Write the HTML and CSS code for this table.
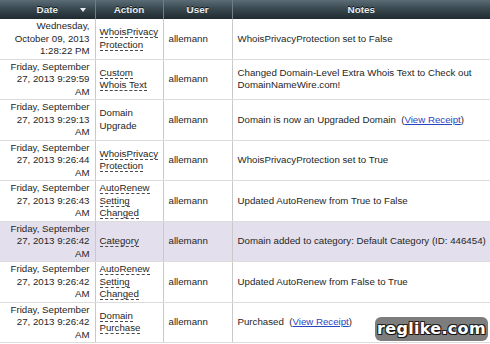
FILE: index.html
```html
<!DOCTYPE html>
<html>
<head>
<meta charset="utf-8">
<link rel="stylesheet" href="styles.css">
</head>
<body>
<div class="wrap">
<table class="log">
  <colgroup>
    <col class="c-date"><col class="c-action"><col class="c-user"><col class="c-notes">
  </colgroup>
  <thead>
    <tr>
      <th class="h-date">Date <span class="sort"></span></th>
      <th>Action</th>
      <th>User</th>
      <th>Notes</th>
    </tr>
  </thead>
  <tbody>
    <tr>
      <td class="date">Wednesday,<br>October 09, 2013<br>1:28:22 PM</td>
      <td class="action"><span class="tip">WhoisPrivacy<br>Protection</span></td>
      <td class="user">allemann</td>
      <td class="notes">WhoisPrivacyProtection set to False</td>
    </tr>
    <tr>
      <td class="date">Friday, September<br>27, 2013 9:29:59<br>AM</td>
      <td class="action"><span class="tip">Custom<br>Whois Text</span></td>
      <td class="user">allemann</td>
      <td class="notes">Changed Domain-Level Extra Whois Text to Check out DomainNameWire.com!</td>
    </tr>
    <tr>
      <td class="date">Friday, September<br>27, 2013 9:29:13<br>AM</td>
      <td class="action">Domain<br>Upgrade</td>
      <td class="user">allemann</td>
      <td class="notes">Domain is now an Upgraded Domain &nbsp;(<a href="#">View Receipt</a>)</td>
    </tr>
    <tr>
      <td class="date">Friday, September<br>27, 2013 9:26:44<br>AM</td>
      <td class="action"><span class="tip">WhoisPrivacy<br>Protection</span></td>
      <td class="user">allemann</td>
      <td class="notes">WhoisPrivacyProtection set to True</td>
    </tr>
    <tr>
      <td class="date">Friday, September<br>27, 2013 9:26:43<br>AM</td>
      <td class="action"><span class="tip">AutoRenew<br>Setting<br>Changed</span></td>
      <td class="user">allemann</td>
      <td class="notes">Updated AutoRenew from True to False</td>
    </tr>
    <tr class="hl">
      <td class="date">Friday, September<br>27, 2013 9:26:42<br>AM</td>
      <td class="action"><span class="tip">Category</span></td>
      <td class="user">allemann</td>
      <td class="notes single">Domain added to category: Default Category (ID: 446454)</td>
    </tr>
    <tr>
      <td class="date">Friday, September<br>27, 2013 9:26:42<br>AM</td>
      <td class="action"><span class="tip">AutoRenew<br>Setting<br>Changed</span></td>
      <td class="user">allemann</td>
      <td class="notes">Updated AutoRenew from False to True</td>
    </tr>
    <tr>
      <td class="date">Friday, September<br>27, 2013 9:26:42<br>AM</td>
      <td class="action"><span class="tip">Domain<br>Purchase</span></td>
      <td class="user">allemann</td>
      <td class="notes">Purchased &nbsp;(<a href="#">View Receipt</a>)</td>
    </tr>
  </tbody>
</table>
<div class="mark">reglike.com</div>
</div>
</body>
</html>
```

FILE: styles.css
```css
html, body {
  margin: 0;
  padding: 0;
  background: #ffffff;
  overflow: hidden;
}
.wrap {
  position: relative;
  width: 490px;
  height: 344px;
  overflow: hidden;
}
.log {
  width: 490px;
  border-collapse: collapse;
  table-layout: fixed;
  font-family: "Liberation Sans", Arial, sans-serif;
  font-size: 9.7px;
  color: #262626;
}
.c-date { width: 95px; }
.c-action { width: 68px; }
.c-user { width: 69px; }
.c-notes { width: 258px; }

.log thead th {
  height: 19px;
  padding: 0 4px;
  background: linear-gradient(to bottom, #5b6c76 0%, #3a4950 45%, #1f2a30 100%);
  color: #e9eef1;
  font-weight: bold;
  font-size: 9.9px;
  text-align: center;
  text-shadow: 0 -1px 0 #0d1418;
  border-left: 1px solid #6f7f88;
  box-sizing: border-box;
}
.log thead th:first-child { border-left: none; }
.h-date { position: relative; }
.sort {
  position: absolute;
  left: 80px;
  top: 8px;
  width: 0;
  height: 0;
  border-left: 3px solid transparent;
  border-right: 3px solid transparent;
  border-top: 4px solid #e9eef1;
}

.log tbody td {
  padding: 1px 5px;
  line-height: 12.5px;
  vertical-align: middle;
  border-bottom: 1px solid #dcdcdc;
  border-left: 1px solid #c9c9c9;
}
.log tbody td:first-child { border-left: none; }
.log td.date {
  text-align: right;
  padding-right: 5px;
}
.log td.action { padding-left: 4px; }
.log td.notes { padding-right: 2px; }
.log td.notes.single { white-space: nowrap; padding-right: 0; }
.log tbody tr.hl td { background: #e4dfec; }
.tip {
  border-bottom: 1px dashed #4a4a4a;
}
.notes a {
  color: #2a45c4;
  text-decoration: underline;
}

.mark {
  position: absolute;
  left: 375px;
  top: 317px;
  width: 113px;
  height: 24px;
  border-radius: 6px;
  background: #7d7d7d;
  color: #ffffff;
  font-family: "DejaVu Sans", Verdana, sans-serif;
  font-weight: bold;
  font-size: 16px;
  line-height: 24px;
  text-align: center;
  letter-spacing: 0.3px;
  text-shadow: 1px 1px 0 #111, -1px -1px 0 #222, 1px -1px 0 #222, -1px 1px 0 #222;
}
```
